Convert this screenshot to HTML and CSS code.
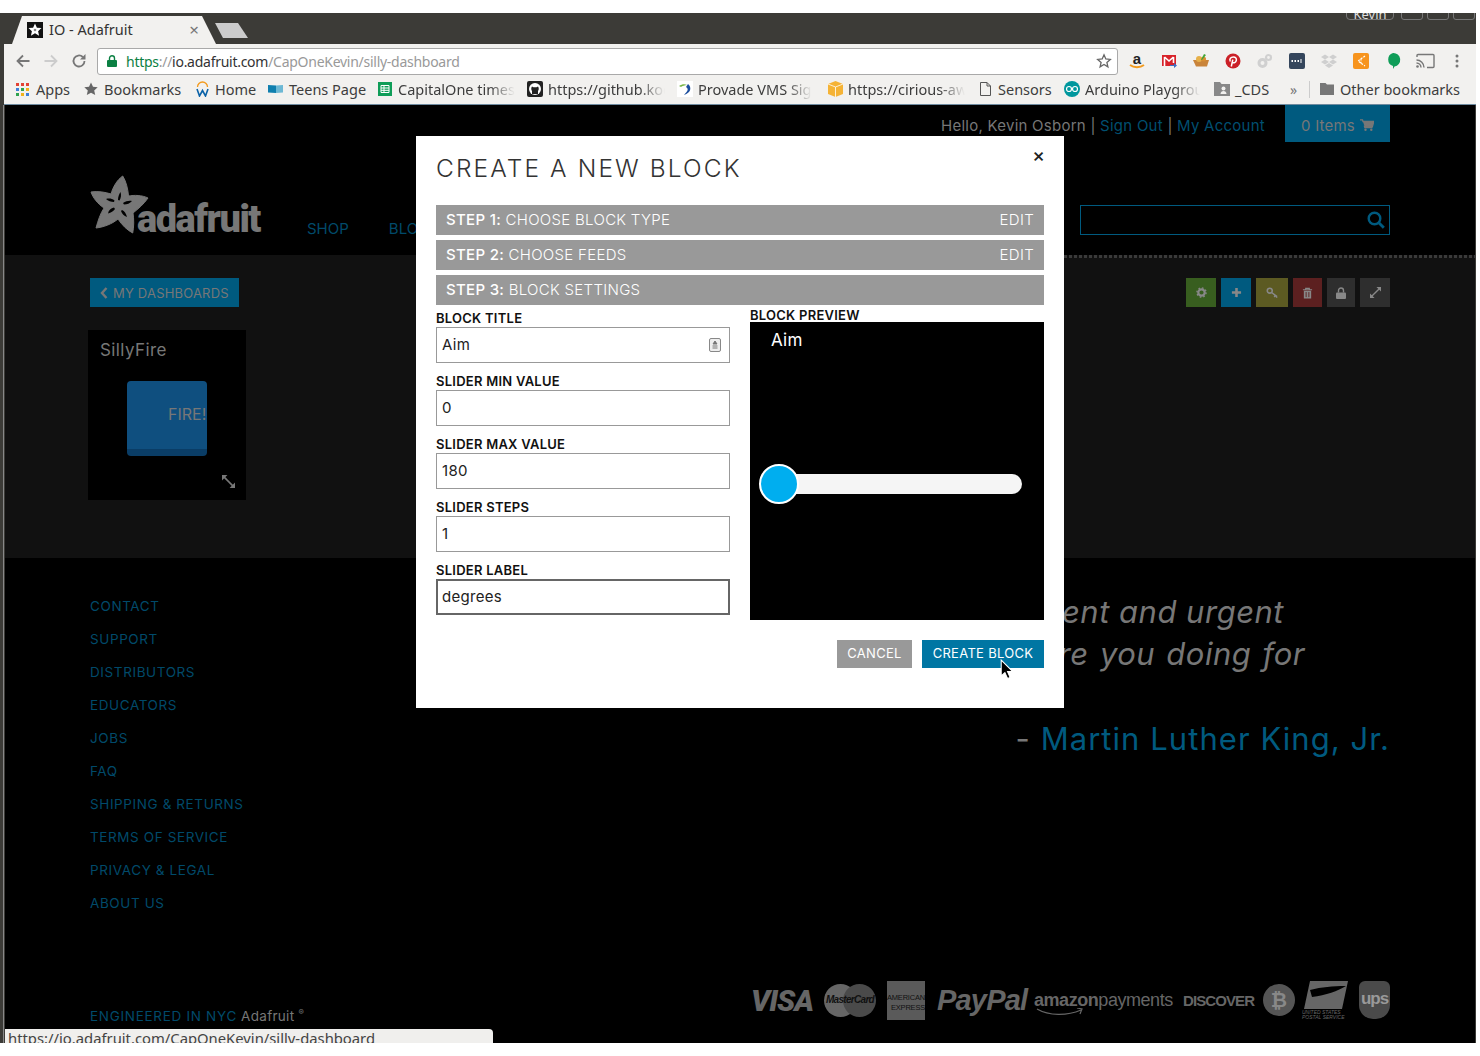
FILE: index.html
```html
<!DOCTYPE html>
<html>
<head>
<meta charset="utf-8" />
<title>IO - Adafruit</title>
<link rel="stylesheet" href="styles.css">
</head>
<body>
<div class="window">
	<div class="titlebar">
		<div class="tab">
			<svg class="fav" viewBox="0 0 16 16"><rect width="16" height="16" fill="#111"/><path d="M8 1.5l1.900 4.200 4.600.4-3.400 3.100 1 4.500-4.100-2.400-4.100 2.400 1-4.500L1.500 6.100l4.600-.4z" fill="#fff"/><circle cx="8" cy="8" r="1.300" fill="#888"/></svg>
			<span class="tab-title">IO - Adafruit</span>
			<span class="tab-x">×</span>
		</div>
		<div class="newtab"></div>
		<div class="controls">
			<span class="ctl-user">Kevin</span>
			<span class="ctl"></span>
			<span class="ctl"></span>
			<span class="ctl ctl-last"></span>
		</div>
	</div>

	<div class="toolbar">
		<div class="navbtns">
			<svg viewBox="0 0 16 16" width="16" height="16"><path d="M14.500 8H3M8 2.500L2.500 8 8 13.500" fill="none" stroke="#777" stroke-width="1.800"/></svg>
			<svg viewBox="0 0 16 16" width="16" height="16"><path d="M1.500 8H13M8 2.500L13.500 8 8 13.500" fill="none" stroke="#ccc" stroke-width="1.800"/></svg>
			<svg viewBox="0 0 16 16" width="16" height="16"><path d="M13.500 8a5.500 5.500 0 1 1-1.700-4" fill="none" stroke="#777" stroke-width="1.800"/><path d="M14.500 1v5.500H9z" fill="#777"/></svg>
		</div>
		<div class="omnibox">
			<svg class="lock" viewBox="0 0 10 12" width="10" height="12"><path d="M2.500 5V3.300a2.500 2.500 0 0 1 5 0V5" fill="none" stroke="#0b8043" stroke-width="1.400"/><rect y="5" width="10" height="7" rx="1" fill="#0b8043"/></svg>
			<span class="url"><span class="url-s">https</span><span class="url-g">://</span>io.adafruit.com<span class="url-g">/CapOneKevin/silly-dashboard</span></span>
			<svg class="ostar" viewBox="0 0 16 16" width="16" height="16"><path d="M8 1.800l1.800 4.200 4.500.4-3.400 3 1 4.400L8 11.500l-3.900 2.300 1-4.400-3.400-3 4.500-.4z" fill="none" stroke="#666" stroke-width="1.300"/></svg>
		</div>
		<div class="exts">
			<span class="ext"><svg viewBox="0 0 18 18" width="18" height="18"><text x="9" y="12" text-anchor="middle" class="amz">a</text><path d="M2 13c4 3 10 3 14 0" fill="none" stroke="#f39a1c" stroke-width="1.800"/></svg></span>
			<span class="ext"><svg viewBox="0 0 16 16" width="16" height="16"><rect x="1" y="2" width="14" height="11" fill="#d8232a"/><path d="M3.500 4v9M12.500 4v6M3.500 4L8 8l4.500-4" fill="none" stroke="#fff" stroke-width="1.600"/><path d="M9 12h4V10l3 2.500-3 2.500v-2H9z" fill="#3d6fc4"/></svg></span>
			<span class="ext"><svg viewBox="0 0 16 16" width="16" height="16"><path d="M0 7h16l-2 6.500H3z" fill="#c9843a"/><circle cx="6" cy="6" r="3" fill="#e6b04a"/><circle cx="10.500" cy="6" r="2.500" fill="#d98e32"/><path d="M8 7l3-6 2 1-4 5z" fill="#3fa535"/></svg></span>
			<span class="ext"><svg viewBox="0 0 16 16" width="16" height="16"><circle cx="8" cy="8" r="7.500" fill="#cb2027"/><path d="M6.300 13.500l1.500-6.800M5.300 8.500c-1.300-2.500.5-4.500 3-4.500 2.300 0 3.500 1.500 3 3.500-.5 2-2.500 3-4 1.700" fill="none" stroke="#fff" stroke-width="1.500"/></svg></span>
			<span class="ext"><svg viewBox="0 0 16 16" width="16" height="16"><circle cx="5.500" cy="10" r="3.500" fill="none" stroke="#d0d0d0" stroke-width="3"/><circle cx="11.500" cy="4.500" r="2.500" fill="none" stroke="#d0d0d0" stroke-width="2.200"/></svg></span>
			<span class="ext"><svg viewBox="0 0 16 16" width="16" height="16"><rect width="16" height="16" rx="2" fill="#35465c"/><path d="M2.500 8h1.500M5.500 8H7M8.500 8H10" stroke="#fff" stroke-width="1.800"/><path d="M12 6v4" stroke="#fff"/></svg></span>
			<span class="ext"><svg viewBox="0 0 16 16" width="16" height="16"><path d="M4 1.500L8 4 4 6.500 0 4zM12 1.500L16 4 12 6.500 8 4zM4 6.500L8 9 4 11.500 0 9zM12 6.500L16 9l-4 2.500L8 9zM4 12.500l4-2.500 4 2.500L8 15z" fill="#cfcfcf"/></svg></span>
			<span class="ext"><svg viewBox="0 0 16 16" width="16" height="16"><rect width="16" height="16" rx="2" fill="#f7941d"/><path d="M12 3L5 8l7 5M8 5.500v5" fill="none" stroke="#fff" stroke-width="1.200" stroke-dasharray="2 1.200"/></svg></span>
			<span class="ext"><svg viewBox="0 0 16 18" width="16" height="18"><path d="M8 1a6.800 6.800 0 0 1 1.500 13.500L8 17v-3a6.800 6.800 0 0 1 0-13z" fill="#0f9d58"/></svg></span>
			<span class="ext"><svg viewBox="0 0 20 16" width="20" height="16"><path d="M2 4V2.500A1 1 0 0 1 3 1.500h15a1 1 0 0 1 1 1v11a1 1 0 0 1-1 1h-6" fill="none" stroke="#777" stroke-width="1.400"/><path d="M1.500 7a7.500 7.500 0 0 1 7.500 7.500M1.500 10a4.500 4.500 0 0 1 4.500 4.500" fill="none" stroke="#777" stroke-width="1.400"/><circle cx="2.500" cy="13.500" r="1.300" fill="#777"/></svg></span>
			<span class="ext"><svg viewBox="0 0 4 14" width="4" height="14"><circle cx="2" cy="2" r="1.500" fill="#777"/><circle cx="2" cy="7" r="1.500" fill="#777"/><circle cx="2" cy="12" r="1.500" fill="#777"/></svg></span>
		</div>
	</div>

	<div class="bookmarks">
		<span class="bm bm-apps"><svg viewBox="0 0 13 13" width="13" height="13"><g><rect width="3" height="3" fill="#e34234"/><rect x="5" width="3" height="3" fill="#e34234"/><rect x="10" width="3" height="3" fill="#e34234"/><rect y="5" width="3" height="3" fill="#3f7fd8"/><rect x="5" y="5" width="3" height="3" fill="#2fa24f"/><rect x="10" y="5" width="3" height="3" fill="#f2b21b"/><rect y="10" width="3" height="3" fill="#2fa24f"/><rect x="5" y="10" width="3" height="3" fill="#f2b21b"/><rect x="10" y="10" width="3" height="3" fill="#3f7fd8"/></g></svg>Apps</span>
		<span class="bm bm-book"><svg viewBox="0 0 14 14" width="14" height="14"><path d="M7 .5l2 4.300 4.700.5-3.500 3.200 1 4.600L7 10.700l-4.200 2.400 1-4.600L.3 5.300 5 4.800z" fill="#666"/></svg>Bookmarks</span>
		<span class="bm bm-home"><svg viewBox="0 0 13 16" width="13" height="16"><path d="M1.500 6a5 5 0 0 1 10 0" fill="none" stroke="#f39a1c" stroke-width="1.300"/><path d="M1 8l2.500 7L6.500 9.500 9.500 15 12 8" fill="none" stroke="#0a62a8" stroke-width="1.600"/></svg>Home</span>
		<span class="bm bm-teens"><svg viewBox="0 0 15 10" width="15" height="10"><path d="M0 1l8 .5V9L0 8.500z" fill="#0f7fae"/><path d="M8 1.500l7-.5v7.500L8 9z" fill="#6db8d4"/></svg>Teens Page</span>
		<span class="bm bm-cap"><svg viewBox="0 0 14 14" width="14" height="14"><rect width="14" height="14" fill="#0f9d58"/><path d="M3 3.500h8v7H3zM3 6h8M3 8.300h8M6 3.500v7" fill="none" stroke="#fff"/></svg><span class="bm-fade bm-fade-cap">CapitalOne timesheet</span></span>
		<span class="bm bm-git"><svg viewBox="0 0 16 16" width="16" height="16"><rect width="16" height="16" rx="2" fill="#222"/><circle cx="8" cy="8" r="6" fill="#fff"/><path d="M5 13v-3C4 9 4 6.500 5 5.500l1.500.8h3L11 5.500c1 1 1 3.500 0 4.500v3z" fill="#222"/></svg><span class="bm-fade bm-fade-git">https://github.kodak.com</span></span>
		<span class="bm bm-prov"><svg viewBox="0 0 16 16" width="16" height="16"><rect width="16" height="16" fill="#fff"/><path d="M2 5c3-2 6-2 8-1-2 0-5 1-6 2z" fill="#7ab648"/><path d="M11 3c4 3 3 9-4 11 2-3 6-5 2-8z" fill="#1b4e9e"/></svg><span class="bm-fade bm-fade-prov">Provade VMS Sign In</span></span>
		<span class="bm bm-cir"><svg viewBox="0 0 15 16" width="15" height="16"><path d="M0 3l7.500-3L15 3v10l-7.500 3L0 13z" fill="#f5b335"/><path d="M7.500 6v10M0 3l7.500 3L15 3" fill="none" stroke="#fff" stroke-width=".8"/></svg><span class="bm-fade bm-fade-cir">https://cirious-aws.com</span></span>
		<span class="bm bm-sens"><svg viewBox="0 0 11 14" width="11" height="14"><path d="M.5.500h6.500l3.500 3.500v9.500H.5zM7 .5V4h3.500" fill="none" stroke="#555"/></svg>Sensors</span>
		<span class="bm bm-ard"><svg viewBox="0 0 16 16" width="16" height="16"><circle cx="8" cy="8" r="8" fill="#00979d"/><circle cx="5" cy="8" r="2.500" fill="none" stroke="#fff" stroke-width="1.200"/><circle cx="11" cy="8" r="2.500" fill="none" stroke="#fff" stroke-width="1.200"/></svg><span class="bm-fade bm-fade-ard">Arduino Playground</span></span>
		<span class="bm bm-cds"><svg viewBox="0 0 16 14" width="16" height="14"><path d="M0 0h6l1.500 2H16v12H0z" fill="#888"/><circle cx="9.500" cy="6.500" r="2" fill="#f2f1ef"/><path d="M6.500 12c0-4 6-4 6 0z" fill="#f2f1ef"/></svg>_CDS</span>
		<span class="bm-more">»</span>
		<span class="bm-sep"></span>
		<span class="bm bm-other"><svg viewBox="0 0 14 12" width="14" height="12"><path d="M0 0h5.500L7 1.500h7V12H0z" fill="#777"/></svg>Other bookmarks</span>
	</div>

	<div class="page">
		<div class="header">
			<div class="topline">
				<span class="hello">Hello, Kevin Osborn | <a>Sign Out</a> | <a>My Account</a></span>
				<span class="cart">0 Items
					<svg viewBox="0 0 14 12" width="14" height="12"><path d="M0 .8h2.500l.5 1.700h10.800l-1.400 5H4.500l.3 1h7.700" fill="none" stroke="#777" stroke-width="1.300"/><path d="M3 2.500h10.800l-1.400 5H4.500z" fill="#777"/><circle cx="5.500" cy="10.700" r="1.200" fill="#777"/><circle cx="11.300" cy="10.700" r="1.200" fill="#777"/></svg>
				</span>
			</div>
			<div class="logoline">
				<div class="logo">
					<svg class="flower" viewBox="0 0 60 60" width="60" height="60"><path d="M32.700 1C36 6 38 14 38.500 21 44 20 52 20 58 23 54 29 48 34 43 38 44 44 44 52 42.700 58 37 55 32 50 28 44 22 49 14 52 6 53 8 46 10 39 14 33 8 29 3 23 1 17 8 16 15 17 21 19 23 12 27 5 32.700 1z" fill="#777" stroke="#777" stroke-linejoin="round"/><path d="M28 25c0-3 1-6 2.500-8 1 3 .5 6-1 8.500zM33 28c3-2 6-2.500 9-2-2 2.500-5 3.500-8 3.500zM32 35c2.500 1 4 3.500 5 7-3-1-5-3-6-6zM25 34c-1.500 2-4 4-7 4.500 .5-3 3-5.500 6-6zM24 27c-3 0-6-1-8-3 3-1 6-.5 8.500 1.500z" fill="#000"/></svg>
					<span class="logotext">adafruit</span>
				</div>
				<div class="mainnav"><a>SHOP</a><a>BLOG</a></div>
				<div class="search">
					<svg viewBox="0 0 18 18" width="18" height="18"><circle cx="7.500" cy="7.500" r="5.800" fill="none" stroke="#005a7f" stroke-width="2.400"/><path d="M11.800 11.800l5 5" stroke="#005a7f" stroke-width="2.800"/></svg>
				</div>
			</div>
		</div>

		<div class="band">
			<div class="dots"></div>
			<div class="bandtop">
				<a class="backbtn"><svg viewBox="0 0 8 12" width="8" height="12"><path d="M6.500 1L2 6l4.500 5" fill="none" stroke="#777" stroke-width="2.400"/></svg>MY DASHBOARDS</a>
				<div class="tools">
					<span class="tool t-green"><svg viewBox="0 0 12 12" width="11" height="11"><circle cx="6" cy="6" r="3.500" fill="none" stroke="#888" stroke-width="2.400"/><circle cx="6" cy="6" r="5" fill="none" stroke="#888" stroke-width="1.500" stroke-dasharray="1.800 2.100"/></svg></span>
					<span class="tool t-blue"><svg viewBox="0 0 12 12" width="11" height="11"><path d="M6 1v10M1 6h10" stroke="#888" stroke-width="2.800"/></svg></span>
					<span class="tool t-olive"><svg viewBox="0 0 14 12" width="13" height="11"><circle cx="4" cy="4" r="2.700" fill="none" stroke="#888" stroke-width="1.700"/><path d="M6 6l6 4.500M10 9l-1 2M12 10.500l-1 1" stroke="#888" stroke-width="1.700"/></svg></span>
					<span class="tool t-red"><svg viewBox="0 0 12 12" width="11" height="12"><path d="M1 2.500h10M4 2.500V1h4v1.500" fill="none" stroke="#888" stroke-width="1.200"/><path d="M2 3.500h8V12H2z" fill="#888"/><path d="M4.500 5v5.500M7.500 5v5.500" stroke="#5c2020"/></svg></span>
					<span class="tool t-dark"><svg viewBox="0 0 10 12" width="10" height="12"><path d="M2.500 5.500V3.500a2.500 2.500 0 0 1 5 0v2" fill="none" stroke="#888" stroke-width="1.400"/><rect y="5.500" width="10" height="6.500" rx="1" fill="#888"/></svg></span>
					<span class="tool t-dark"><svg viewBox="0 0 12 12" width="11" height="11"><path d="M1 11l10-10" stroke="#888" stroke-width="1.500"/><path d="M7 0h5v5zM0 7v5h5z" fill="#888"/></svg></span>
				</div>
			</div>
			<div class="card">
				<div class="card-title">SillyFire</div>
				<div class="firebtn"><span>FIRE!</span></div>
				<svg class="card-exp" viewBox="0 0 12 12" width="13" height="13"><path d="M2 2l8 8" stroke="#777" stroke-width="1.500"/><path d="M0 5V0h5zM12 7v5H7z" fill="#777"/></svg>
			</div>
		</div>

		<div class="footer">
			<div class="footmain">
				<ul class="footlinks">
					<li>CONTACT</li>
					<li>SUPPORT</li>
					<li>DISTRIBUTORS</li>
					<li>EDUCATORS</li>
					<li>JOBS</li>
					<li>FAQ</li>
					<li>SHIPPING &amp; RETURNS</li>
					<li>TERMS OF SERVICE</li>
					<li>PRIVACY &amp; LEGAL</li>
					<li>ABOUT US</li>
				</ul>
				<div class="quote">
					<div class="q q1">Life's most persistent and urgent</div>
					<div class="q q2">question is, 'What are you doing for</div>
					<div class="q q3">others?'</div>
					<div class="attrib">- <a>Martin Luther King, Jr.</a></div>
				</div>
			</div>
			<div class="footbottom">
				<div class="madein"><a>ENGINEERED IN NYC</a> Adafruit <sup>®</sup></div>
				<div class="paylogos">
					<span class="pl-visa">VISA</span>
					<span class="pl-mc"><i></i><i></i><b>MasterCard</b></span>
					<span class="pl-amex">AMERICAN<br>EXPRESS</span>
					<span class="pl-paypal">PayPal</span>
					<span class="pl-amzn"><b>amazon</b>payments
						<svg viewBox="0 0 50 8" width="50" height="8"><path d="M1 1c12 7 30 7 44 1M41 0l5 1-2 5" fill="none" stroke="#666" stroke-width="1.200"/></svg>
					</span>
					<span class="pl-disc">DISCOVER</span>
					<span class="pl-btc">₿</span>
					<span class="pl-usps"><svg viewBox="0 0 46 28" width="46" height="28"><path d="M8 0h38l-6 28H2z" fill="#666"/><path d="M8 9c12-3 22-4 36-4-8 5-20 9-34 11z" fill="#000"/></svg><em>UNITED STATES<br>POSTAL SERVICE</em></span>
					<span class="pl-ups">ups</span>
				</div>
			</div>
		</div>

		<div class="statusbubble">https://io.adafruit.com/CapOneKevin/silly-dashboard</div>
	</div>

	<div class="modal">
		<h2 class="modal-title">CREATE A NEW BLOCK</h2>
		<span class="modal-x">×</span>
		<div class="steps">
			<div class="step"><span><b>STEP 1:</b> CHOOSE BLOCK TYPE</span><span>EDIT</span></div>
			<div class="step"><span><b>STEP 2:</b> CHOOSE FEEDS</span><span>EDIT</span></div>
			<div class="step"><span><b>STEP 3:</b> BLOCK SETTINGS</span></div>
		</div>
		<div class="settings">
			<div class="fields">
				<label>BLOCK TITLE</label>
				<div class="inp inp-title">Aim
					<svg viewBox="0 0 12 14" width="12" height="14"><rect x=".5" y=".5" width="11" height="13" rx="1.500" fill="#eee" stroke="#888"/><path d="M6 3l2 3H4zM3.500 8h5M3.500 10h5" fill="#777" stroke="#777"/></svg>
				</div>
				<label>SLIDER MIN VALUE</label>
				<div class="inp">0</div>
				<label>SLIDER MAX VALUE</label>
				<div class="inp">180</div>
				<label>SLIDER STEPS</label>
				<div class="inp">1</div>
				<label>SLIDER LABEL</label>
				<div class="inp inp-focus">degrees</div>
			</div>
			<div class="preview">
				<label>BLOCK PREVIEW</label>
				<div class="preview-box">
					<div class="preview-name">Aim</div>
					<div class="slider"><span class="knob"></span></div>
				</div>
			</div>
		</div>
		<div class="modal-btns">
			<a class="btn btn-gray">CANCEL</a>
			<a class="btn btn-blue">CREATE BLOCK
				<svg class="cursor" viewBox="0 0 13 19" width="14" height="20"><path d="M1 1v15l3.500-3 2.500 5.500 2.500-1-2.500-5.500H12z" fill="#000" stroke="#fff"/></svg>
			</a>
		</div>
	</div>
</div>
</body>
</html>
```

FILE: styles.css
```css
*{margin: 0;padding: 0;box-sizing: border-box;}
html,body{height: 100%;background: #fff;overflow: hidden;}
body{font-family: "Inter","Liberation Sans",sans-serif;}
a{text-decoration: none;}
ul{list-style: none;}
svg{display: block;flex: none;}

.window{position: relative;width: 1476px;height: 1030px;margin-top: 13px;background: #3c3b37;padding-left: 4px;overflow: hidden;display: flex;flex-direction: column;}

/* browser chrome */
.titlebar{height: 31px;display: flex;flex: none;}
.tab{width: 204px;height: 28px;margin: 3px 0 0 8px;padding: 0 15px 2px;background: #f2f1ef;clip-path: polygon(0 100%,10px 0,190px 0,204px 100%);display: flex;align-items: center;font: 14.500px "Noto Sans",sans-serif;color: #333;}
.fav{width: 16px;height: 16px;margin: 2px 6px 0 0;}
.tab-title{flex: 1;}
.tab-x{color: #777;font-size: 17px;margin-right: 2px;}
.newtab{width: 33px;height: 15px;margin: 10px 0 0 -1px;background: #ccc;clip-path: polygon(0 0,23px 0,33px 100%,8px 100%);}
.controls{margin-left: auto;display: flex;height: 7px;overflow: hidden;padding-right: 1px;}
.ctl-user{width: 48px;height: 20px;margin-top: -13px;margin-right: 7px;border: 1px solid #777;border-radius: 4px;color: #ddd;font: 13px/26px "Noto Sans",sans-serif;text-align: center;}
.ctl{width: 22px;height: 20px;margin-top: -13px;margin-right: 4px;border: 1px solid #777;border-radius: 3px;}
.ctl-last{margin-right: 0;}

.toolbar{height: 33px;background: #f2f1ef;display: flex;align-items: center;flex: none;}
.navbtns{width: 93px;display: flex;justify-content: space-between;padding: 0 10px 0 11px;}
.omnibox{width: 1021px;height: 27px;margin-top: 1px;background: #fff;border: 1px solid #a9a9a9;border-radius: 3px;display: flex;align-items: center;padding: 0 5px 0 9px;}
.lock{margin-right: 9px;}
.url{flex: 1;font: 14px "Noto Sans",sans-serif;letter-spacing: -.27px;color: #333;}
.url-s{color: #0b8043;}
.url-g{color: #999;}
.exts{display: flex;padding-left: 3px;}
.ext{width: 32px;display: flex;justify-content: center;align-items: center;}
.amz{font: bold 15px "Liberation Sans",sans-serif;fill: #222;}

.bookmarks{height: 28px;background: #f2f1ef;border-bottom: 1px solid #6f8ba0;display: flex;align-items: center;flex: none;font: 14.500px "Noto Sans",sans-serif;color: #3d3d3d;padding: 0 0 3px 12px;}
.bm{display: flex;align-items: center;flex: none;}
.bm svg{margin-right: 7px;}
.bm-apps{width: 68px;}
.bm-book{width: 112px;}
.bm-book svg{margin-right: 6px;}
.bm-home{width: 72px;}
.bm-home svg{margin-right: 6px;}
.bm-teens{width: 110px;}
.bm-teens svg{margin-right: 6px;}
.bm-cap{width: 149px;}
.bm-cap svg{margin-right: 6px;}
.bm-git{width: 150px;}
.bm-git svg{margin-right: 5px;}
.bm-prov{width: 151px;}
.bm-prov svg{margin-right: 5px;}
.bm-cir{width: 152px;}
.bm-cir svg{margin-right: 5px;}
.bm-sens{width: 84px;}
.bm-ard{width: 150px;}
.bm-ard svg{margin-right: 5px;}
.bm-cds{width: 76px;}
.bm-cds svg{margin-right: 5px;}
.bm-fade{display: block;white-space: nowrap;overflow: hidden;-webkit-mask-image: linear-gradient(to right,#000 78%,transparent 100%);mask-image: linear-gradient(to right,#000 78%,transparent 100%);}
.bm-fade-cap{width: 117px;}
.bm-fade-git{width: 117px;}
.bm-fade-prov{width: 114px;}
.bm-fade-cir{width: 117px;}
.bm-fade-ard{width: 115px;}
.bm-more{width: 19px;color: #777;font-size: 14px;flex: none;}
.bm-sep{width: 1px;height: 17px;background: #ccc;margin-right: 10px;flex: none;}
.bm-other svg{margin-right: 6px;}

/* page under the modal, everything dimmed */
.page{position: relative;flex: 1;display: flex;flex-direction: column;margin: 0 1px;background: #000;min-height: 0;}
.window::before{content: "";position: absolute;left: 3px;top: 92px;bottom: 0;width: 1px;background: #888;}

.header{height: 150px;padding: 0 85px;flex: none;}
.topline{height: 37px;display: flex;justify-content: flex-end;}
.hello{font-size: 15px;line-height: 41px;color: #777;letter-spacing: .25px;margin-right: 20px;}
.hello a{color: #004f70;}
.cart{width: 105px;padding-top: 3px;background: #005a7f;color: #777;font-size: 15px;display: flex;align-items: center;justify-content: center;gap: 5px;letter-spacing: .2px;}
.logoline{display: flex;margin-top: 33px;}
.logo{width: 172px;height: 62px;position: relative;}
.flower{position: absolute;left: 0;top: 0;}
.logotext{position: absolute;left: 47px;top: 22px;font: 900 38px/44px "Roboto",sans-serif;letter-spacing: -1.500px;color: #777;}
.mainnav{display: flex;gap: 40px;margin-left: 45px;padding-top: 45px;font-size: 15px;color: #004a6a;height: 70px;}
.mainnav a{line-height: 18px;}
.search{width: 310px;height: 30px;margin: 30px 0 0 auto;border: 1px solid #005a7f;display: flex;align-items: center;justify-content: flex-end;padding-right: 4px;}

.band{height: 303px;background: #111;padding: 0 85px;flex: none;}
.dots{height: 3px;width: 411px;margin: 0 -85px 0 auto;background: repeating-linear-gradient(to right,#3a3a3a 0 3px,transparent 3px 5px);}
.bandtop{display: flex;justify-content: space-between;margin-top: 20px;}
.backbtn{width: 149px;height: 29px;background: #005a7f;color: #777;font-size: 13px;display: flex;align-items: center;padding-left: 10px;gap: 5px;letter-spacing: .2px;}
.tools{display: flex;gap: 5px;}
.tool{width: 30px;height: 29px;display: flex;align-items: center;justify-content: center;}
.t-green{background: #385e1f;}
.t-blue{background: #005a7f;}
.t-olive{width: 32px;background: #5c5a22;}
.t-red{width: 29px;background: #5c2020;}
.t-dark{background: #2e2e2e;}
.t-dark:nth-child(5){width: 28px;}
.card{position: relative;width: 158px;height: 170px;margin: 23px 0 0 -2px;background: #000;padding: 10px 12px;overflow: hidden;}
.card-title{font-size: 17px;line-height: 21px;color: #777;letter-spacing: .4px;}
.firebtn{width: 80px;height: 75px;margin: 20px 0 0 27px;background: #0f4f7f;border-bottom: 7px solid #0a3d66;border-radius: 4px;overflow: hidden;padding: 23px 0 0 41px;font-size: 16px;line-height: 20px;color: #777;white-space: nowrap;}
.card-exp{position: absolute;right: 11px;bottom: 12px;}

.footer{flex: 1;min-height: 0;padding: 0 85px;display: flex;flex-direction: column;position: relative;}
.footmain{display: flex;justify-content: space-between;padding-top: 32px;}
.footlinks{font-size: 13.500px;line-height: 33px;color: #004a6a;letter-spacing: .6px;}
.quote{width: 760px;padding-top: 1px;}
.q{font-size: 31px;line-height: 42px;font-style: italic;color: #777;text-align: right;white-space: nowrap;letter-spacing: .5px;}
.q1{padding-right: 106px;}
.q2{padding-right: 85px;word-spacing: 2px;}
.q3{padding-right: 540px;}
.attrib{margin-top: 1px;font-size: 31px;line-height: 42px;text-align: right;color: #777;letter-spacing: 1.050px;}
.attrib a{color: #005a7f;}
.footbottom{margin-top: auto;height: 72px;display: flex;justify-content: space-between;position: relative;}
.madein{align-self: flex-start;margin-top: 31px;font-size: 13.500px;line-height: 20px;color: #777;letter-spacing: .3px;}
.madein a{color: #004a6a;letter-spacing: .7px;}
.madein sup{font-size: 8px;}
.paylogos{display: flex;align-items: center;height: 44px;margin-top: 7px;color: #666;white-space: nowrap;}
.pl-visa{width: 62px;font: italic 900 30px "Roboto",sans-serif;letter-spacing: -1px;}
.pl-mc{position: relative;width: 52px;height: 33px;display: block;margin-left: 11px;}
.pl-mc i{position: absolute;top: 0;width: 33px;height: 33px;border-radius: 50%;background: #5c5c5c;}
.pl-mc i:first-child{left: 0;background: #666;}
.pl-mc i:nth-child(2){right: 0;background: #4a4a4a;}
.pl-mc b{position: absolute;left: 0;top: 9px;width: 52px;text-align: center;font: bold italic 10px/14px "Liberation Sans",sans-serif;letter-spacing: -.7px;color: #111;}
.pl-amex{width: 38px;height: 39px;margin-left: 11px;background: #5a5a5a;color: #111;font: 7.500px/10px "Liberation Sans",sans-serif;letter-spacing: -.2px;padding-top: 12px;text-align: right;overflow: hidden;}
.pl-paypal{width: 90px;margin-left: 12px;font: italic bold 29px "Liberation Sans",sans-serif;letter-spacing: -.8px;}
.pl-amzn{position: relative;width: 139px;margin-left: 7px;font: 18px "Liberation Sans",sans-serif;letter-spacing: -.45px;}
.pl-amzn svg{position: absolute;left: 2px;top: 18px;}
.pl-disc{width: 69px;margin-left: 10px;font: bold 15px "Liberation Sans",sans-serif;letter-spacing: -.9px;}
.pl-btc{width: 32px;height: 32px;margin-left: 11px;border-radius: 50%;background: #555;color: #888;font: bold 20px/32px "DejaVu Sans",sans-serif;text-align: center;}
.pl-usps{display: block;width: 47px;margin-left: 7px;}
.pl-usps em{display: block;font: italic 5px/5px "Liberation Sans",sans-serif;margin-top: 1px;}
.pl-ups{width: 31px;height: 38px;margin-left: 10px;border-radius: 6px 6px 14px 14px;background: #4a4a4a;color: #999;font: bold 17px/36px "Liberation Sans",sans-serif;letter-spacing: -1px;text-align: center;}
.statusbubble{position: absolute;left: 0;bottom: 0;width: 488px;height: 14px;background: #f0efed;border-radius: 0 4px 0 0;padding-left: 3px;font: 14.800px/19px "Noto Sans",sans-serif;color: #444;overflow: hidden;white-space: nowrap;}

/* modal */
.modal{position: absolute;left: 416px;top: 123px;width: 648px;height: 572px;background: #fff;padding: 0 20px;}
.modal-title{font-size: 24.500px;font-weight: 300;line-height: 30px;padding-top: 17px;height: 69px;color: #333;letter-spacing: 2.100px;}
.modal-x{position: absolute;right: 19px;top: 8px;font-size: 19px;line-height: 24px;color: #222;font-weight: 500;}
.steps{display: flex;flex-direction: column;gap: 5px;}
.step{height: 30px;background: #999;color: #fff;padding: 0 10px;font-size: 15px;font-weight: 300;letter-spacing: .3px;line-height: 30px;display: flex;justify-content: space-between;}
.step b{font-weight: 500;}
.settings{display: flex;justify-content: space-between;}
.fields{width: 294px;padding-top: 6px;}
label{display: block;font-size: 13px;font-weight: 600;line-height: 15px;color: #111;letter-spacing: .25px;}
.fields label{height: 16px;}
.inp{height: 36px;margin-bottom: 11px;border: 1px solid #999;padding: 0 5px;font-size: 15px;letter-spacing: .3px;line-height: 34px;color: #222;}
.inp:last-child{margin-bottom: 0;}
.inp-title{display: flex;align-items: center;justify-content: space-between;padding-right: 8px;}
.inp-focus{border: 2px solid #666;padding: 0 4px;line-height: 32px;}
.preview{width: 294px;padding-top: 3px;}
.preview label{height: 14px;}
.preview-box{height: 298px;background: #000;padding: 7px 21px;position: relative;}
.preview-name{color: #fff;font-size: 17px;letter-spacing: .3px;line-height: 22px;}
.slider{position: absolute;left: 29px;top: 152px;width: 243px;height: 20px;background: #f5f5f5;border-radius: 10px;}
.knob{position: absolute;left: -20px;top: -10px;width: 40px;height: 40px;border-radius: 50%;background: #00aeef;border: 2px solid #fff;}
.modal-btns{display: flex;justify-content: flex-end;gap: 10px;margin-top: 20px;}
.btn{height: 28px;color: #fff;font-size: 13px;line-height: 27px;text-align: center;letter-spacing: .3px;}
.btn-gray{width: 75px;background: #999;}
.btn-blue{width: 122px;background: #0076a3;position: relative;}
.cursor{position: absolute;left: 78px;top: 19px;}
```
